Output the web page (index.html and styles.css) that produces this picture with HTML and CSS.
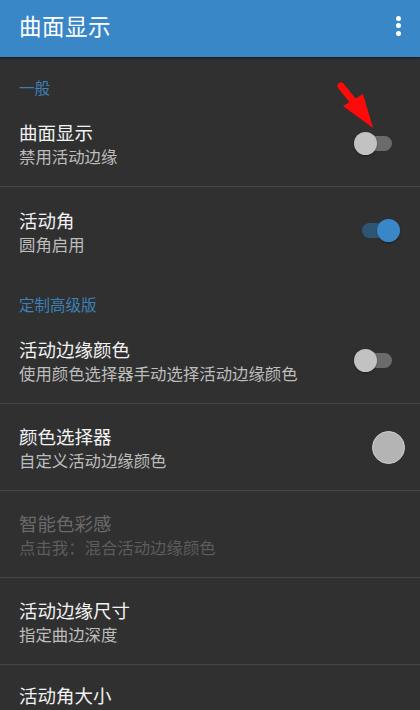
FILE: index.html
```html
<!DOCTYPE html>
<html lang="zh">
<head>
<meta charset="utf-8">
<link rel="stylesheet" href="styles.css">
</head>
<body>
<div class="app">
  <header class="appbar">
    <h1 class="appbar-title">曲面显示</h1>
    <div class="overflow"><span></span><span></span><span></span></div>
  </header>
  <main class="prefs">
    <div class="category">一般</div>
    <div class="row divided">
      <div class="texts">
        <div class="title">曲面显示</div>
        <div class="summary">禁用活动边缘</div>
      </div>
      <div class="switch"><span class="track"></span><span class="thumb"></span></div>
      <svg class="arrow" width="50" height="50" viewBox="0 0 50 50">
        <line x1="4" y1="4" x2="20" y2="24" stroke="#ff0a0a" stroke-width="7" stroke-linecap="round"/>
        <polygon points="6,24 26,12 36,46" fill="#ff0a0a"/>
      </svg>
    </div>
    <div class="row">
      <div class="texts">
        <div class="title">活动角</div>
        <div class="summary">圆角启用</div>
      </div>
      <div class="switch on"><span class="track"></span><span class="thumb"></span></div>
    </div>
    <div class="category">定制高级版</div>
    <div class="row divided">
      <div class="texts">
        <div class="title">活动边缘颜色</div>
        <div class="summary">使用颜色选择器手动选择活动边缘颜色</div>
      </div>
      <div class="switch"><span class="track"></span><span class="thumb"></span></div>
    </div>
    <div class="row divided">
      <div class="texts">
        <div class="title">颜色选择器</div>
        <div class="summary">自定义活动边缘颜色</div>
      </div>
      <div class="swatch"></div>
    </div>
    <div class="row divided disabled">
      <div class="texts">
        <div class="title">智能色彩感</div>
        <div class="summary">点击我：混合活动边缘颜色</div>
      </div>
    </div>
    <div class="row divided">
      <div class="texts">
        <div class="title">活动边缘尺寸</div>
        <div class="summary">指定曲边深度</div>
      </div>
    </div>
    <div class="row last">
      <div class="texts">
        <div class="title">活动角大小</div>
      </div>
    </div>
  </main>
</div>
</body>
</html>
```

FILE: styles.css
```css
* { box-sizing: border-box; }
html, body {
  margin: 0;
  padding: 0;
  background: #303030;
  font-family: "Noto Sans CJK SC", "Noto Sans", sans-serif;
}
.app {
  width: 420px;
  height: 710px;
  overflow: hidden;
  background: #303030;
}
.appbar {
  height: 57px;
  background: #3a87c7;
  display: flex;
  align-items: center;
  justify-content: space-between;
  padding: 0 0 2px 19px;
  box-shadow: 0 1px 2px rgba(0,0,0,0.5);
  position: relative;
  z-index: 1;
}
.appbar-title {
  margin: 0 0 6px 0;
  font-size: 22.5px;
  font-weight: 400;
  color: #ffffff;
  line-height: 30px;
  letter-spacing: 0.5px;
}
.overflow {
  width: 40px;
  display: flex;
  flex-direction: column;
  align-items: center;
  gap: 2.5px;
  margin: 0 2px 4px 0;
}
.overflow span {
  width: 5px;
  height: 5px;
  border-radius: 50%;
  background: #ffffff;
}
.prefs {
  display: flex;
  flex-direction: column;
}
.category {
  height: 43px;
  padding: 20px 0 0 19px;
  font-size: 15.5px;
  line-height: 20px;
  color: #3b80b9;
}
.row {
  position: relative;
  height: 87px;
  flex: none;
  display: flex;
  align-items: center;
  padding: 0 20px 0 19px;
}
.row.divided {
  border-bottom: 1px solid #464646;
}
.row.last {
  height: auto;
  align-items: flex-start;
  padding-top: 15px;
}
.texts {
  flex: 1;
  display: flex;
  flex-direction: column;
  padding-top: 3px;
}
.title {
  font-size: 18.5px;
  line-height: 24px;
  color: #f2f2f2;
}
.summary {
  font-size: 16.4px;
  line-height: 25px;
  color: #bdbdbd;
}
.disabled .title { color: #6a6a6a; }
.disabled .summary { color: #5c5c5c; }
.switch {
  position: relative;
  width: 46px;
  height: 23px;
  flex: none;
}
.switch .track {
  position: absolute;
  left: 8px;
  top: 4px;
  width: 30px;
  height: 15px;
  border-radius: 8px;
  background: #6b6b6b;
}
.switch .thumb {
  position: absolute;
  left: 0;
  top: 0;
  width: 23px;
  height: 23px;
  border-radius: 50%;
  background: #c2c2c2;
  box-shadow: 0 1px 2px rgba(0,0,0,0.35);
}
.switch.on .track { background: #2e5674; }
.switch.on .thumb {
  left: 23px;
  background: #3a87c7;
}
.swatch {
  flex: none;
  width: 33px;
  height: 33px;
  border-radius: 50%;
  background: #b4b4b4;
  border: 1px solid #cfcfcf;
  margin-right: -5px;
}
.arrow {
  position: absolute;
  left: 337px;
  top: -18px;
}
```
